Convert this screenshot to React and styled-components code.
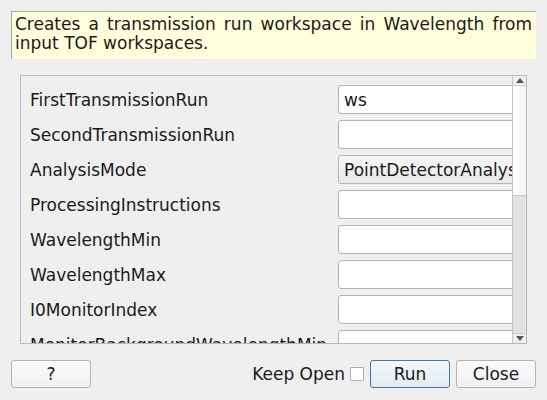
import React from "react";
import styled, { createGlobalStyle } from "styled-components";

const Global = createGlobalStyle`
  html, body { margin: 0; padding: 0; background: #efefef; }
  body { font-family: "DejaVu Sans", "Liberation Sans", sans-serif; font-size: 17px; color: #1a1a1a; }
  * { box-sizing: border-box; }
`;

const Page = styled.div`
  width: 547px;
  height: 400px;
  padding: 11px 11px 0 11px;
  display: flex;
  flex-direction: column;
  overflow: hidden;
`;

const Description = styled.div`
  width: 525px;
  height: 48px;
  background: #ffffdc;
  border-top: 1px solid #a5a5a5;
  border-left: 1px solid #a5a5a5;
  padding: 3px 4px 0 3px;
  line-height: 19px;
  text-align: justify;
  text-align-last: left;
`;

const ScrollArea = styled.div`
  margin: 16px 0 0 9px;
  width: 507px;
  height: 269px;
  border: 1px solid #b9b9b9;
  display: flex;
  background: #efefef;
`;

const Viewport = styled.div`
  flex: 1;
  overflow: hidden;
  padding: 9px 0 0 9px;
  display: flex;
  flex-direction: column;
  gap: 6px;
`;

const Row = styled.div`
  display: flex;
  align-items: center;
  height: 29px;
  flex-shrink: 0;
`;

const Label = styled.div`
  width: 308px;
  flex-shrink: 0;
  white-space: nowrap;
`;

const Field = styled.div`
  width: 220px;
  flex-shrink: 0;
  height: 29px;
  border: 1px solid #b4b4b4;
  border-radius: 3px;
  background: ${(p) => (p.$combo ? "linear-gradient(#f6f6f6, #e9e9e9)" : "#ffffff")};
  padding: 0 5px;
  display: flex;
  align-items: center;
  white-space: nowrap;
  overflow: hidden;
`;

const ScrollBar = styled.div`
  width: 14px;
  border-left: 1px solid #c4c4c4;
  display: flex;
  flex-direction: column;
  background: #e3e3e3;
`;

const Arrow = styled.div`
  height: 10px;
  display: flex;
  align-items: center;
  justify-content: center;
  background: #efefef;
  border-bottom: ${(p) => (p.$up ? "1px solid #d0d0d0" : "none")};
  border-top: ${(p) => (p.$up ? "none" : "1px solid #d0d0d0")};
`;

const Handle = styled.div`
  height: 110px;
  background: linear-gradient(90deg, #ffffff, #f4f4f4);
  border-bottom: 1px solid #c8c8c8;
`;

const Track = styled.div`
  flex: 1;
`;

const Buttons = styled.div`
  margin-top: 16px;
  display: flex;
  align-items: center;
  height: 28px;
`;

const Button = styled.button`
  width: 80px;
  height: 28px;
  border-radius: 3px;
  border: 1px solid ${(p) => (p.$default ? "#3b7ab5" : "#b3b3b3")};
  background: ${(p) => (p.$default ? "linear-gradient(#f4f8fb, #e2ebf3)" : "linear-gradient(#fbfbfb, #f0f0f0)")};
  font-family: "DejaVu Sans", sans-serif;
  font-size: 17px;
  color: #1a1a1a;
  padding: 0;
  margin-left: ${(p) => p.$ml || 0}px;
`;

const Spacer = styled.div`
  flex: 1;
`;

const KeepLabel = styled.span`
  margin-right: 5px;
`;

const Check = styled.span`
  width: 14px;
  height: 14px;
  border: 1px solid #b0b0b0;
  background: #fff;
  border-radius: 1px;
  display: inline-block;
`;

const Tri = ({ up }) => (
  <svg width="8" height="5" viewBox="0 0 8 5">
    <polygon points={up ? "0,5 8,5 4,0" : "0,0 8,0 4,5"} fill="#555" />
  </svg>
);

const rows = [
  ["FirstTransmissionRun", "ws"],
  ["SecondTransmissionRun", ""],
  ["AnalysisMode", "PointDetectorAnalysis", true],
  ["ProcessingInstructions", ""],
  ["WavelengthMin", ""],
  ["WavelengthMax", ""],
  ["I0MonitorIndex", ""],
  ["MonitorBackgroundWavelengthMin", ""],
];

export default function App() {
  return (
    <>
      <Global />
      <Page>
        <Description>
          Creates a transmission run workspace in Wavelength from input TOF workspaces.
        </Description>
        <ScrollArea>
          <Viewport>
            {rows.map(([l, v, c]) => (
              <Row key={l}>
                <Label>{l}</Label>
                <Field $combo={c}>{v}</Field>
              </Row>
            ))}
          </Viewport>
          <ScrollBar>
            <Arrow $up>
              <Tri up />
            </Arrow>
            <Handle />
            <Track />
            <Arrow>
              <Tri />
            </Arrow>
          </ScrollBar>
        </ScrollArea>
        <Buttons>
          <Button>?</Button>
          <Spacer />
          <KeepLabel>Keep Open</KeepLabel>
          <Check />
          <Button $default $ml={6}>Run</Button>
          <Button $ml={6}>Close</Button>
        </Buttons>
      </Page>
    </>
  );
}
